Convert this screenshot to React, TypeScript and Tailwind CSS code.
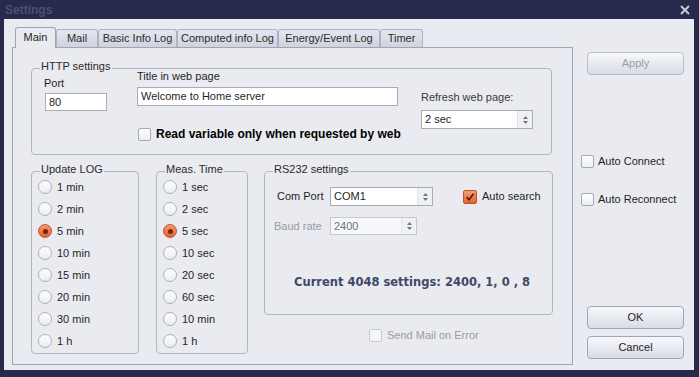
import React, { ReactNode } from "react";

function Box({ checked = false, disabled = false }: { checked?: boolean; disabled?: boolean }) {
  if (checked) {
    return (
      <span className="flex h-[14px] w-[14px] shrink-0 items-center justify-center rounded-[2px] border border-[#bf5429] bg-gradient-to-b from-[#f89b6c] to-[#e2622c]">
        <svg width="10" height="10" viewBox="0 0 10 10">
          <path d="M1.6 5.2 L4 7.7 L8.6 1.8" fill="none" stroke="#4f1f0c" strokeWidth="1.7" />
        </svg>
      </span>
    );
  }
  return (
    <span
      className={`block h-[13px] w-[13px] shrink-0 rounded-[2px] border ${
        disabled ? "border-[#c7cad2] bg-[#f4f5f7]" : "border-[#a4a9b7] bg-gradient-to-b from-white to-[#eceef2]"
      }`}
    />
  );
}

function Radio({ label, on = false }: { label: string; on?: boolean }) {
  return (
    <div className="flex h-[22px] items-center">
      {on ? (
        <span className="flex h-[14px] w-[14px] items-center justify-center rounded-full border border-[#c0562d] bg-gradient-to-b from-[#f7976b] to-[#e2622d]">
          <span className="h-[5px] w-[5px] rounded-full bg-[#6a2812]" />
        </span>
      ) : (
        <span className="h-[14px] w-[14px] rounded-full border border-[#aab0bd] bg-gradient-to-b from-white to-[#eaecf1]" />
      )}
      <span className="ml-[5px]">{label}</span>
    </div>
  );
}

function Group({ title, className, children }: { title: string; className: string; children?: ReactNode }) {
  return (
    <div className={`rounded-[4px] border border-[#b3b7c4] ${className}`}>
      <span className="-mt-[9px] ml-[8px] block w-fit bg-[#e9ebf0] px-px leading-[13px] text-[#2a2a2a]">{title}</span>
      {children}
    </div>
  );
}

function Spin({ value, w, disabled = false }: { value: string; w: string; disabled?: boolean }) {
  return (
    <div
      className={`flex ${w} items-stretch border ${
        disabled ? "h-[18px] border-[#c5c8d1] bg-[#f6f7f9] text-[#6e7180]" : "h-[19px] border-[#a7abb8] bg-white"
      }`}
    >
      <span className="flex flex-1 items-center pl-[3px]">{value}</span>
      <span className="flex w-[15px] flex-col items-center justify-center gap-[2px] border-l border-[#e0e2e8] bg-[#f0f1f4]">
        <svg width="5" height="3" viewBox="0 0 5 3">
          <path d="M0 3 L2.5 0 L5 3Z" fill="#727684" />
        </svg>
        <svg width="5" height="3" viewBox="0 0 5 3">
          <path d="M0 0 L2.5 3 L5 0Z" fill="#727684" />
        </svg>
      </span>
    </div>
  );
}

function Button({ label, disabled = false, className = "" }: { label: string; disabled?: boolean; className?: string }) {
  return (
    <div
      className={`flex h-[23px] w-[97px] items-center justify-center rounded-[4px] border ${
        disabled ? "border-[#b9bdca] text-[#9a9ca8]" : "border-[#9fa4b6] text-[#1f1f1f]"
      } bg-gradient-to-b from-[#f7f8fb] to-[#d9dce6] ${className}`}
    >
      {label}
    </div>
  );
}

const tabs = [
  { name: "Main", w: "w-[41px]" },
  { name: "Mail", w: "w-[42px]" },
  { name: "Basic Info Log", w: "w-[79px]" },
  { name: "Computed info Log", w: "w-[101px]" },
  { name: "Energy/Event Log", w: "w-[102px]" },
  { name: "Timer", w: "w-[43px]" },
];

const logTimes = ["1 min", "2 min", "5 min", "10 min", "15 min", "20 min", "30 min", "1 h"];
const measTimes = ["1 sec", "2 sec", "5 sec", "10 sec", "20 sec", "60 sec", "10 min", "1 h"];

export default function App() {
  return (
    <div className="flex h-[377px] w-[699px] flex-col overflow-hidden bg-[#262b4e] font-['Liberation_Sans',Arial,sans-serif] text-[11px] text-[#1f1f1f]">
      {/* title bar */}
      <div className="flex h-[19px] items-center justify-between pl-[5px] pr-[9px]">
        <span className="text-[12px] font-bold text-[#4a5073]">Settings</span>
        <svg width="10" height="10" viewBox="0 0 10 10">
          <path d="M1 1 L9 9 M9 1 L1 9" stroke="#c6cad7" strokeWidth="2" />
        </svg>
      </div>

      <div className="ml-[4px] mr-[5px] flex h-[351px] bg-[#e9ebf0]">
        {/* tab control */}
        <div className="flex w-[569px] flex-col pl-[8px] pt-[8px]">
          <div className="relative z-10 flex h-[20px] items-end pl-[3px]">
            {tabs.map((t, i) =>
              i === 0 ? (
                <div
                  key={t.name}
                  className={`${t.w} -mb-px flex h-[21px] items-center justify-center rounded-t-[3px] border border-b-0 border-[#a0a5b5] bg-[#e9ebf0] pb-[2px]`}
                >
                  {t.name}
                </div>
              ) : (
                <div
                  key={t.name}
                  className={`${t.w} flex h-[18px] items-center justify-center rounded-t-[3px] border border-b-0 border-[#aeb3c2] bg-gradient-to-b from-[#e4e7ee] to-[#cfd3df] text-[#2c2c2c]`}
                >
                  {t.name}
                </div>
              )
            )}
          </div>

          <div className="flex h-[318px] w-[561px] flex-col border border-[#a0a5b5]">
            {/* HTTP settings */}
            <Group title="HTTP settings" className="ml-[18px] mt-[20px] h-[87px] w-[521px]">
              <div className="-mt-[4px] flex">
                <div className="ml-[12px] flex w-[93px] flex-col pt-[8px]">
                  <span className="leading-[13px]">Port</span>
                  <div className="ml-px mt-[3px] flex h-[18px] w-[62px] items-center border border-[#a7abb8] bg-white pl-[3px]">
                    80
                  </div>
                </div>
                <div className="flex w-[284px] flex-col pt-[1px]">
                  <span className="leading-[13px]">Title in web page</span>
                  <div className="mt-[4px] flex h-[19px] w-[261px] items-center border border-[#a7abb8] bg-white pl-[3px]">
                    Welcome to Home server
                  </div>
                  <div className="ml-px mt-[21px] flex h-[14px] items-center">
                    <Box />
                    <span className="ml-[5px] text-[12px] font-bold text-black">Read variable only when requested by web</span>
                  </div>
                </div>
                <div className="flex flex-col pt-[22px]">
                  <span className="leading-[13px] text-[#3a3a3a]">Refresh web page:</span>
                  <div className="mt-[6px]">
                    <Spin value="2 sec" w="w-[112px]" />
                  </div>
                </div>
              </div>
            </Group>

            <div className="mt-[16px] flex">
              <Group title="Update LOG" className="ml-[18px] h-[183px] w-[108px]">
                <div className="pl-[6px]">
                  {logTimes.map((t) => (
                    <Radio key={t} label={t} on={t === "5 min"} />
                  ))}
                </div>
              </Group>

              <Group title="Meas. Time" className="ml-[17px] h-[183px] w-[92px]">
                <div className="pl-[6px]">
                  {measTimes.map((t) => (
                    <Radio key={t} label={t} on={t === "5 sec"} />
                  ))}
                </div>
              </Group>

              <div className="ml-[16px] flex flex-col">
                <Group title="RS232 settings" className="h-[144px] w-[289px]">
                  <div className="mt-[11px] flex h-[19px] items-center pl-[12px]">
                    <span className="w-[53px]">Com Port</span>
                    <Spin value="COM1" w="w-[103px]" />
                    <span className="ml-[30px]">
                      <Box checked />
                    </span>
                    <span className="ml-[5px]">Auto search</span>
                  </div>
                  <div className="mt-[11px] flex h-[18px] items-center pl-[9px]">
                    <span className="w-[56px] text-[#9a9ca6]">Baud rate</span>
                    <Spin value="2400" w="w-[87px]" disabled />
                  </div>
                  <div className="mt-[40px] pl-[29px] font-['DejaVu_Sans',sans-serif] text-[11.5px] font-bold leading-[15px] text-[#3e4867]">
                    Current 4048 settings: 2400, 1, 0 , 8
                  </div>
                </Group>
                <div className="mt-[14px] flex h-[13px] items-center pl-[105px] text-[#9a9ca6]">
                  <Box disabled />
                  <span className="ml-[5px]">Send Mail on Error</span>
                </div>
              </div>
            </div>
          </div>
        </div>

        {/* right column */}
        <div className="flex flex-1 flex-col pb-[11px]">
          <Button label="Apply" disabled className="ml-[14px] mt-[33px]" />
          <div className="ml-[8px] mt-[80px] flex h-[13px] items-center">
            <Box />
            <span className="ml-[4px]">Auto Connect</span>
          </div>
          <div className="ml-[8px] mt-[25px] flex h-[13px] items-center">
            <Box />
            <span className="ml-[4px]">Auto Reconnect</span>
          </div>
          <Button label="OK" className="ml-[14px] mt-auto" />
          <Button label="Cancel" className="ml-[14px] mt-[7px]" />
        </div>
      </div>
    </div>
  );
}
